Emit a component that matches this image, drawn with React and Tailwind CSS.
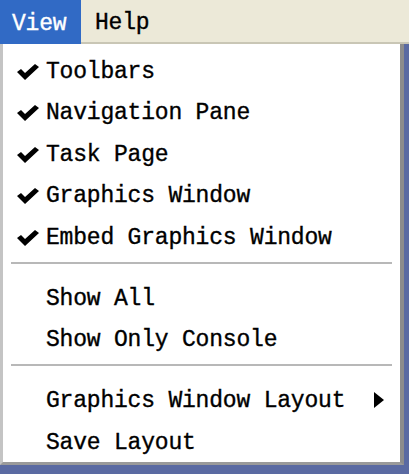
import React from "react";

const mono = { fontFamily: '"Liberation Mono", "DejaVu Sans Mono", monospace' };

function Check() {
  return (
    <svg width="24" height="20" viewBox="0 0 24 20" className="block">
      <path d="M1 10 L5 7 L9 11 L19 2 L23 5 L9 18 Z" fill="#000" />
    </svg>
  );
}

function Item({ checked, label, submenu }) {
  return (
    <div className="flex items-center h-[41.5px] pt-[4px] relative">
      <div className="w-[43px] flex justify-end pr-[6px]">{checked ? <Check /> : null}</div>
      <span className="whitespace-pre text-black">{label}</span>
      {submenu ? (
        <svg width="11" height="16" viewBox="0 0 11 16" className="absolute left-[371px] top-[13px]">
          <path d="M0 0 L10 8 L0 16 Z" fill="#000" />
        </svg>
      ) : null}
    </div>
  );
}

function Sep() {
  return (
    <div className="h-[19.5px] flex items-start pt-[5px] pl-[8px] pr-[8px]">
      <div className="w-full h-[2px] bg-[#b8b8b8]" />
    </div>
  );
}

export default function App() {
  return (
    <div className="w-[409px] h-[474px] bg-[#5a6aa2] overflow-hidden text-[23px] tracking-[-0.2px] [-webkit-text-stroke:0.35px_currentColor]" style={mono}>
      <div className="h-[44px] bg-[#ECE9D8] border-b-2 border-[#c9c6b5] flex items-stretch">
        <div className="w-[81px] bg-[#316AC5] text-white flex items-center pl-[12px] pt-[4px] h-[44px]">View</div>
        <div className="flex items-center pl-[14px] pt-[4px] text-black">Help</div>
      </div>
      <div className="flex">
        <div className="w-[404px] bg-white border-l-[3px] border-[#c4c4c4] border-r-[4px] border-r-[#8c8c8c] border-b-[3px] border-b-[#9a9a9a] pt-[5px]">
          <Item checked label="Toolbars" />
          <Item checked label="Navigation Pane" />
          <Item checked label="Task Page" />
          <Item checked label="Graphics Window" />
          <Item checked label="Embed Graphics Window" />
          <Sep />
          <Item label="Show All" />
          <Item label="Show Only Console" />
          <Sep />
          <Item submenu label="Graphics Window Layout" />
          <Item label="Save Layout" />
        </div>
      </div>
    </div>
  );
}
